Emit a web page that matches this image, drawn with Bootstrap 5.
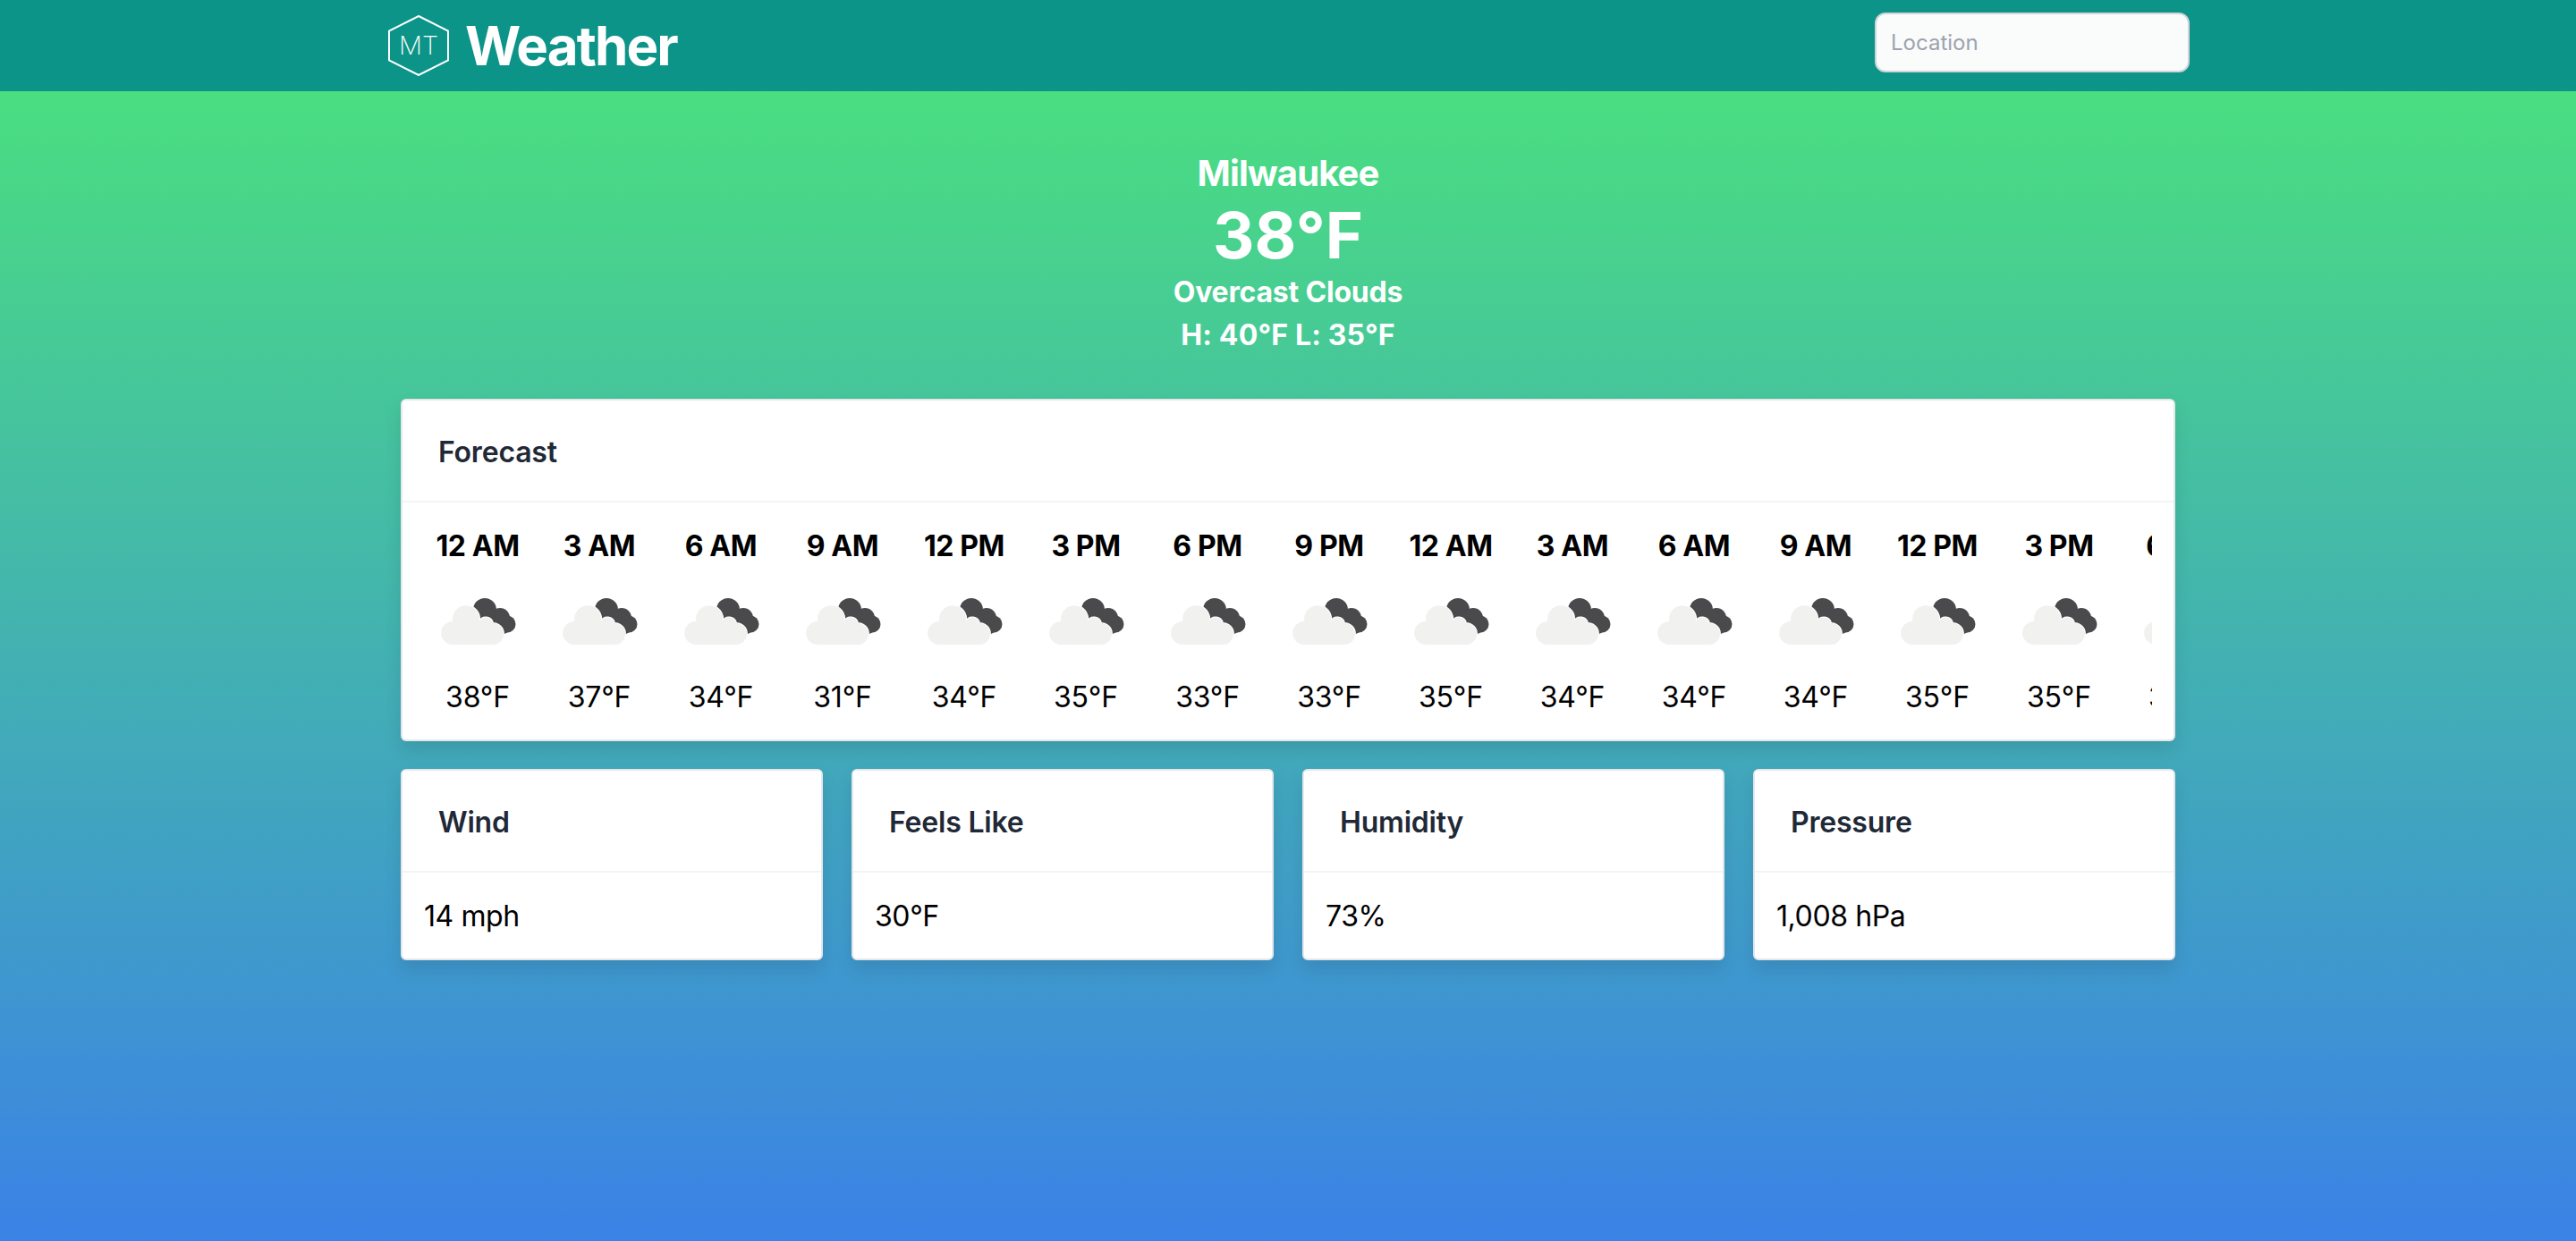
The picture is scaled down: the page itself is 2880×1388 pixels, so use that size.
<!DOCTYPE html>
<html lang="en">
<head>
<meta charset="utf-8">
<title>Weather</title>
<link href="https://cdn.jsdelivr.net/npm/bootstrap@5.3.0/dist/css/bootstrap.min.css" rel="stylesheet">
<style>
html,body{height:100%}
body{font-family:Inter,"Liberation Sans",sans-serif;color:#000;background:#3b82e6;display:flex;flex-direction:column}
.wx-nav{background:#0d9488;height:102px;padding:0}
.wx-nav-inner{width:2014px;margin:0 0 0 434px;display:flex;align-items:center;justify-content:space-between;padding:0}
.wx-brand{font-size:60px;font-weight:700;color:#fff;line-height:1;padding:0;margin:0;gap:18px;letter-spacing:-1.9px}
.wx-brand:hover{color:#fff}
.wx-logo{width:68px;height:68px;display:block}
.wx-input{width:352px;height:67px;border:2px solid #d1d5db;border-radius:12px;background:#fafbfb;font-size:24px;padding:0 16px;margin-top:-7px;color:#000;box-shadow:none}
.wx-input::placeholder{color:#9ca3af}
.wx-main{flex:1;background:linear-gradient(to bottom,#4ade80,#3b82e6);padding-top:68px}
.wx-wrap{width:1984px;margin:0 0 0 448px}
.wx-hero{color:#fff;text-align:center;margin-bottom:47px}
.wx-city{font-size:40px;font-weight:700;line-height:48px;letter-spacing:-.9px}
.wx-temp{font-size:72px;font-weight:700;line-height:80px;margin-top:5px}
.wx-cond{font-size:32px;font-weight:700;line-height:48px;letter-spacing:-.2px}
.wx-hl{font-size:32px;font-weight:700;line-height:48px;letter-spacing:.15px}
.wx-card{border:2px solid #e5e7eb;border-radius:6px;background:#fff;box-shadow:0 10px 20px rgba(0,0,0,.1)}
.wx-head{background:#fff;border-bottom:2px solid #f3f4f6;padding:3px 0 0 40px;height:114px;display:flex;align-items:center;font-size:32px;font-weight:600;color:#1f2937;line-height:1.5;letter-spacing:-.2px}
.wx-head:first-child{border-radius:4px 4px 0 0}
.wx-scroll{padding:25px 24px 23px;overflow:hidden}
.wx-track{display:flex;gap:16px;overflow:hidden}
.wx-hour{flex:0 0 120px;text-align:center}
.wx-time{font-size:32px;font-weight:700;line-height:48px;white-space:nowrap;letter-spacing:-.4px}
.wx-icon{display:block;width:120px;height:80px;margin:16px 0 25px}
.wx-deg{font-size:32px;line-height:48px;white-space:nowrap;letter-spacing:-.2px}
.wx-row{--bs-gutter-x:32px;--bs-gutter-y:0;margin-top:31px}
.wx-val{padding:25px 24px 23px;font-size:32px;line-height:48px;letter-spacing:-.4px}
</style>
</head>
<body>
<svg width="0" height="0" class="position-absolute">
  <defs>
    <g id="cloud">
      <g fill="#4a4a4c">
        <circle cx="62" cy="31" r="13"/>
        <circle cx="79" cy="40" r="11"/>
        <circle cx="87" cy="47" r="9.500"/>
        <path d="M52 22 L92 42 L92 54 L80 60 L50 40Z"/>
      </g>
      <g fill="#f1f1f0" stroke="#fff" stroke-width="2" paint-order="stroke">
        <path d="M26 70 A13 13 0 0 1 26.300 44 A15 15 0 1 1 55.700 44.500 A8 8 0 0 1 71 46 A12 12 0 0 1 71 70Z"/>
      </g>
    </g>
  </defs>
</svg>
<nav class="navbar wx-nav">
  <div class="wx-nav-inner">
    <a class="navbar-brand d-flex align-items-center wx-brand" href="#">
      <svg class="wx-logo" viewBox="0 0 68 68" aria-label="MT logo">
        <polygon points="34,1 67,17.500 67,50.500 34,67 1,50.500 1,17.500" fill="none" stroke="#fff" stroke-width="2"/>
        <text x="34" y="44" text-anchor="middle" font-family="Inter,sans-serif" font-size="29" font-weight="200" letter-spacing="0" fill="#fff">MT</text>
      </svg>
      Weather
    </a>
    <input class="form-control wx-input" type="text" placeholder="Location">
  </div>
</nav>
<main class="wx-main">
  <div class="wx-wrap">
    <div class="wx-hero">
      <div class="wx-city">Milwaukee</div>
      <div class="wx-temp">38°F</div>
      <div class="wx-cond">Overcast Clouds</div>
      <div class="wx-hl">H: 40°F L: 35°F</div>
    </div>
    <div class="card wx-card">
      <div class="card-header wx-head">Forecast</div>
      <div class="wx-scroll">
        <div class="wx-track">
          <div class="wx-hour"><div class="wx-time">12 AM</div><svg class="wx-icon" viewBox="-6 0 120 80"><use href="#cloud"/></svg><div class="wx-deg">38°F</div></div>
          <div class="wx-hour"><div class="wx-time">3 AM</div><svg class="wx-icon" viewBox="-6 0 120 80"><use href="#cloud"/></svg><div class="wx-deg">37°F</div></div>
          <div class="wx-hour"><div class="wx-time">6 AM</div><svg class="wx-icon" viewBox="-6 0 120 80"><use href="#cloud"/></svg><div class="wx-deg">34°F</div></div>
          <div class="wx-hour"><div class="wx-time">9 AM</div><svg class="wx-icon" viewBox="-6 0 120 80"><use href="#cloud"/></svg><div class="wx-deg">31°F</div></div>
          <div class="wx-hour"><div class="wx-time">12 PM</div><svg class="wx-icon" viewBox="-6 0 120 80"><use href="#cloud"/></svg><div class="wx-deg">34°F</div></div>
          <div class="wx-hour"><div class="wx-time">3 PM</div><svg class="wx-icon" viewBox="-6 0 120 80"><use href="#cloud"/></svg><div class="wx-deg">35°F</div></div>
          <div class="wx-hour"><div class="wx-time">6 PM</div><svg class="wx-icon" viewBox="-6 0 120 80"><use href="#cloud"/></svg><div class="wx-deg">33°F</div></div>
          <div class="wx-hour"><div class="wx-time">9 PM</div><svg class="wx-icon" viewBox="-6 0 120 80"><use href="#cloud"/></svg><div class="wx-deg">33°F</div></div>
          <div class="wx-hour"><div class="wx-time">12 AM</div><svg class="wx-icon" viewBox="-6 0 120 80"><use href="#cloud"/></svg><div class="wx-deg">35°F</div></div>
          <div class="wx-hour"><div class="wx-time">3 AM</div><svg class="wx-icon" viewBox="-6 0 120 80"><use href="#cloud"/></svg><div class="wx-deg">34°F</div></div>
          <div class="wx-hour"><div class="wx-time">6 AM</div><svg class="wx-icon" viewBox="-6 0 120 80"><use href="#cloud"/></svg><div class="wx-deg">34°F</div></div>
          <div class="wx-hour"><div class="wx-time">9 AM</div><svg class="wx-icon" viewBox="-6 0 120 80"><use href="#cloud"/></svg><div class="wx-deg">34°F</div></div>
          <div class="wx-hour"><div class="wx-time">12 PM</div><svg class="wx-icon" viewBox="-6 0 120 80"><use href="#cloud"/></svg><div class="wx-deg">35°F</div></div>
          <div class="wx-hour"><div class="wx-time">3 PM</div><svg class="wx-icon" viewBox="-6 0 120 80"><use href="#cloud"/></svg><div class="wx-deg">35°F</div></div>
          <div class="wx-hour"><div class="wx-time">6 PM</div><svg class="wx-icon" viewBox="-6 0 120 80"><use href="#cloud"/></svg><div class="wx-deg">35°F</div></div>
        </div>
      </div>
    </div>
    <div class="row wx-row">
      <div class="col-3"><div class="card wx-card"><div class="card-header wx-head">Wind</div><div class="wx-val">14 mph</div></div></div>
      <div class="col-3"><div class="card wx-card"><div class="card-header wx-head">Feels Like</div><div class="wx-val">30°F</div></div></div>
      <div class="col-3"><div class="card wx-card"><div class="card-header wx-head">Humidity</div><div class="wx-val">73%</div></div></div>
      <div class="col-3"><div class="card wx-card"><div class="card-header wx-head">Pressure</div><div class="wx-val">1,008 hPa</div></div></div>
    </div>
  </div>
</main>
</body>
</html>
